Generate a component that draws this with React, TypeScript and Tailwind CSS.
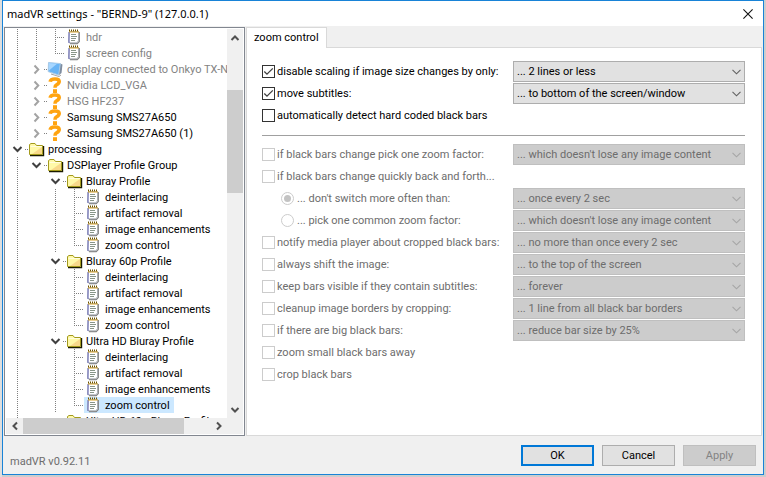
import { useState } from 'react';
import clsx from 'clsx';

type IconName = 'page' | 'folder' | 'screen' | 'unknown';

type TreeRow = {
  // one character per indent column: | line, T branch, L last branch, v open, > closed
  guides: string;
  icon: IconName;
  label: string;
  muted?: boolean;
  selected?: boolean;
};

const profileRows = (name: string, selected = false): TreeRow[] => [
  { guides: '| v', icon: 'folder', label: name },
  { guides: '| |T', icon: 'page', label: 'deinterlacing' },
  { guides: '| |T', icon: 'page', label: 'artifact removal' },
  { guides: '| |T', icon: 'page', label: 'image enhancements' },
  { guides: '| |L', icon: 'page', label: 'zoom control', selected },
];

const treeRows: TreeRow[] = [
  { guides: '||T', icon: 'page', label: 'hdr', muted: true },
  { guides: '||L', icon: 'page', label: 'screen config', muted: true },
  { guides: '|>', icon: 'screen', label: 'display connected to Onkyo TX-N', muted: true },
  { guides: '|>', icon: 'unknown', label: 'Nvidia LCD_VGA', muted: true },
  { guides: '|>', icon: 'unknown', label: 'HSG HF237', muted: true },
  { guides: '|>', icon: 'unknown', label: 'Samsung SMS27A650' },
  { guides: '|>', icon: 'unknown', label: 'Samsung SMS27A650 (1)' },
  { guides: 'v', icon: 'folder', label: 'processing' },
  { guides: '|v', icon: 'folder', label: 'DSPlayer Profile Group' },
  ...profileRows('Bluray Profile'),
  ...profileRows('Bluray 60p Profile'),
  ...profileRows('Ultra HD Bluray Profile', true),
  { guides: '| v', icon: 'folder', label: 'Ultra HD 60p Bluray Profile' },
];

type Option = {
  id: string;
  label: string;
  value?: string;
  kind?: 'checkbox' | 'radio';
  checked?: boolean;
  disabled?: boolean;
};

const activeOptions: Option[] = [
  { id: 'disable-scaling', label: 'disable scaling if image size changes by only:', value: '... 2 lines or less', checked: true },
  { id: 'move-subs', label: 'move subtitles:', value: '... to bottom of the screen/window', checked: true },
  { id: 'detect-bars', label: 'automatically detect hard coded black bars' },
];

const barOptions: Option[] = [
  { id: 'bars-change', label: 'if black bars change pick one zoom factor:', value: "... which doesn't lose any image content" },
  { id: 'bars-quick', label: 'if black bars change quickly back and forth...' },
  { id: 'switch-often', label: "... don't switch more often than:", value: '... once every 2 sec', kind: 'radio', checked: true },
  { id: 'common-zoom', label: '... pick one common zoom factor:', value: "... which doesn't lose any image content", kind: 'radio' },
  { id: 'notify', label: 'notify media player about cropped black bars:', value: '... no more than once every 2 sec' },
  { id: 'shift', label: 'always shift the image:', value: '... to the top of the screen' },
  { id: 'keep-bars', label: 'keep bars visible if they contain subtitles:', value: '... forever' },
  { id: 'cleanup', label: 'cleanup image borders by cropping:', value: '... 1 line from all black bar borders' },
  { id: 'big-bars', label: 'if there are big black bars:', value: '... reduce bar size by 25%' },
  { id: 'zoom-away', label: 'zoom small black bars away' },
  { id: 'crop', label: 'crop black bars' },
];

function Guide({ type }: { type: string }) {
  const dots = { stroke: '#808080', strokeDasharray: '1 1', shapeRendering: 'crispEdges' as const };
  return (
    <svg width="19" height="16" viewBox="0 0 19 16" fill="none" className="shrink-0">
      {(type === '|' || type === 'T') && <path d="M9.5 0V16" {...dots} />}
      {type === 'L' && <path d="M9.5 0V9" {...dots} />}
      {(type === 'T' || type === 'L') && <path d="M11 8.5H19" {...dots} />}
      {(type === 'v' || type === '>') && <path d="M17 8.5H18" {...dots} />}
      {type === 'v' && <path d="M5.5 6L9.5 10L13.5 6" stroke="#404040" strokeWidth="2" />}
      {type === '>' && <path d="M7.5 4.5L11.3 8.5L7.5 12.5" stroke="#a3a3a3" strokeWidth="2" />}
    </svg>
  );
}

function TreeIcon({ name }: { name: IconName }) {
  return (
    <svg width="19" height="16" viewBox="0 0 19 16" fill="none" className="shrink-0">
      {name !== 'page' && <rect y="8" width="1" height="1" fill="#808080" />}
      {name === 'folder' && (
        <>
          <path d="M3 14.5H16.5V5" stroke="#1a1a00" strokeWidth="1.4" />
          <path d="M2.5 13.5V3.5L4 2.5H8L9.5 4.5H15.5V13.5Z" fill="#fff9a8" stroke="#a39a1c" />
          <path d="M15 6V13H5Z" fill="#f8d98a" />
          <path d="M3.5 5.5H15" stroke="#fffde0" />
        </>
      )}
      {name === 'page' && (
        <>
          <path d="M5 14.7H12.2L14.3 12.5V3" stroke="#808080" strokeWidth="1.2" />
          <path d="M4.5 2.5H13.5V11.8L11.8 13.8H4L3.6 12Z" fill="#fff" stroke="#a8adb2" />
          <path d="M4 3V14" stroke="#7476bd" strokeWidth="1.2" />
          <path d="M4 1.5H14" stroke="#6b5200" strokeWidth="2" strokeDasharray="1 1" />
          <path d="M4 3H14" stroke="#d9a62c" />
          <path d="M6 5.5H11M6 7.5H12M6 9.5H11M6 11.5H10" stroke="#6b7b6b" strokeWidth="0.8" />
        </>
      )}
      {name === 'screen' && (
        <>
          <path d="M14 2.5L16.5 3.5L15.5 12L12.5 14.5Z" fill="#7f8da0" />
          <path d="M2.5 1.5L14.3 2.6L12.7 14L2.2 10.6Z" fill="#68b4f5" stroke="#a9cbe8" />
          <path d="M3 2L11 2.8L3 9.5Z" fill="#a6d6ff" />
          <path d="M5 13L13 15.5L15 14" stroke="#a4a4a4" />
        </>
      )}
      {name === 'unknown' && (
        <>
          <path
            d="M4.1 4.8C4.5 2.6 6.3 2 9 2C11.7 2 13.2 2.9 13.2 4.6C13.2 6.4 12 7 10.6 7.8C9.5 8.4 9 9 9 10.8"
            stroke="#ffa411"
            strokeWidth="3.6"
          />
          <rect x="7" y="12.2" width="4" height="3.8" fill="#ffa411" />
        </>
      )}
    </svg>
  );
}

function Arrow({ dir }: { dir: 'up' | 'down' | 'left' | 'right' }) {
  const paths = { up: 'M1.5 7L5 3.5L8.5 7', down: 'M1.5 3L5 6.5L8.5 3', left: 'M7 1.5L3.5 5L7 8.5', right: 'M3 1.5L6.5 5L3 8.5' };
  return (
    <svg width="10" height="10" viewBox="0 0 10 10" fill="none">
      <path d={paths[dir]} stroke="#505050" strokeWidth="2" />
    </svg>
  );
}

function Tree() {
  return (
    <div className="w-[241px] shrink-0 border border-[#828790] bg-white p-px flex flex-col min-h-0">
      <div className="flex flex-1 min-h-0">
        <ul className="flex-1 min-w-0 overflow-hidden pl-0.5" aria-label="Settings tree">
          {treeRows.map((row, i) => (
            <li key={i} className="flex h-4 leading-[17px] whitespace-nowrap">
              {row.guides.split('').map((g, j) => (
                <Guide key={j} type={g} />
              ))}
              <span className={clsx('flex pr-1', row.selected && 'bg-[#cce8ff]', row.muted && 'text-[#838383]')}>
                <TreeIcon name={row.icon} />
                <span className="pl-0.5">{row.label}</span>
              </span>
            </li>
          ))}
        </ul>
        <div className="w-4 shrink-0 bg-[#f0f0f0] flex flex-col">
          <button aria-label="Scroll up" className="h-[17px] flex items-center justify-center">
            <Arrow dir="up" />
          </button>
          <div className="mt-11 h-[103px] bg-[#cdcdcd]" />
          <button aria-label="Scroll down" className="mt-auto h-[17px] flex items-center justify-center">
            <Arrow dir="down" />
          </button>
        </div>
      </div>
      <div className="h-4 shrink-0 bg-[#f0f0f0] flex pr-4">
        <button aria-label="Scroll left" className="w-[17px] flex items-center justify-center">
          <Arrow dir="left" />
        </button>
        <div className="w-[161px] bg-[#cdcdcd]" />
        <button aria-label="Scroll right" className="ml-auto w-[17px] flex items-center justify-center">
          <Arrow dir="right" />
        </button>
      </div>
    </div>
  );
}

function OptionRow({ option }: { option: Option }) {
  const { id, label, value, kind = 'checkbox', disabled } = option;
  const [checked, setChecked] = useState(!!option.checked);
  return (
    <div className={clsx('grid grid-cols-[251px_1fr] items-center h-[22px] pb-px', disabled && 'text-[#6d6d6d]')}>
      <div className={clsx('flex items-center', kind === 'radio' ? 'pl-[19px] gap-[3px]' : 'gap-0.5')}>
        <span className="relative flex">
          <input
            id={id}
            type={kind}
            checked={checked}
            disabled={disabled}
            onChange={(e) => setChecked(e.target.checked)}
            className={clsx(
              'appearance-none w-[13px] h-[13px] border bg-white',
              kind === 'radio' && 'rounded-full',
              disabled ? 'border-[#cccccc]' : 'border-[#333333]'
            )}
          />
          {checked && (
            <svg width="13" height="13" viewBox="0 0 13 13" fill="none" className="absolute inset-0 pointer-events-none">
              {kind === 'radio' ? (
                <circle cx="6.5" cy="6.5" r="3.5" fill="#c3c3c3" />
              ) : (
                <path d="M2.3 6.5L5 9.2L10.8 3.4" stroke="#404040" strokeWidth="1.3" />
              )}
            </svg>
          )}
        </span>
        <label htmlFor={id} className="whitespace-nowrap">
          {label}
        </label>
      </div>
      {value && (
        <div className="relative flex">
          <select
            aria-label={label}
            disabled={disabled}
            className={clsx(
              'appearance-none w-full h-[21px] border pl-[3px] pr-5 opacity-100',
              disabled ? 'bg-[#cccccc] border-[#bfbfbf]' : 'bg-[#e1e1e1] border-[#adadad]'
            )}
          >
            <option>{value}</option>
          </select>
          <svg width="9" height="6" viewBox="0 0 9 6" fill="none" className="absolute right-1 top-2 pointer-events-none">
            <path d="M0.5 0.8L4.5 4.8L8.5 0.8" stroke={disabled ? '#a6a6a6' : '#606060'} strokeWidth="1.1" />
          </svg>
        </div>
      )}
    </div>
  );
}

export default function App() {
  return (
    <div className="h-screen bg-[#cdcdcd] border-l-2 border-[#dedede] pr-0.5 pb-0.5 flex font-['Roboto',sans-serif] text-[11px] leading-4 text-black">
      <div className="flex-1 min-w-0 border border-[#1883d7] bg-[#f0f0f0] flex flex-col">
        <header className="h-[25px] shrink-0 bg-white flex items-center justify-between pl-1 pr-2.5">
          <h1 className="font-['Noto_Sans',sans-serif]">madVR settings - "BERND-9" (127.0.0.1)</h1>
          <button aria-label="Close">
            <svg width="10" height="10" viewBox="0 0 10 10" fill="none">
              <path d="M0.4 0.4L9.6 9.6M9.6 0.4L0.4 9.6" stroke="#111" strokeWidth="1.1" />
            </svg>
          </button>
        </header>

        <main className="flex-1 min-h-0 flex pt-px pl-px pr-px gap-px">
          <Tree />
          <div className="flex-1 min-w-0 flex flex-col">
            <div role="tablist" className="flex">
              <button
                role="tab"
                aria-selected="true"
                className="relative z-10 h-[21px] -mb-px px-[7px] bg-white border border-b-0 border-[#d9d9d9]"
              >
                zoom control
              </button>
            </div>
            <section className="flex-1 bg-white border border-[#d9d9d9] pl-[15px] pr-4 pt-[13px]">
              {activeOptions.map((option) => (
                <OptionRow key={option.id} option={option} />
              ))}
              <hr className="mt-2 mb-2 border-[#a0a0a0]" />
              {barOptions.map((option) => (
                <OptionRow key={option.id} option={{ ...option, disabled: true }} />
              ))}
            </section>
          </div>
        </main>

        <footer className="shrink-0 h-[38px] flex items-start justify-between px-[7px] pt-[9px]">
          <span className="pt-[9px] text-[#6d6d6d]">madVR v0.92.11</span>
          <div className="flex gap-2">
            <button className="w-[73px] h-[21px] bg-[#e1e1e1] border-2 border-[#0078d7] leading-none">OK</button>
            <button className="w-[73px] h-[21px] bg-[#e1e1e1] border border-[#adadad] leading-none">Cancel</button>
            <button disabled className="w-[73px] h-[21px] bg-[#cccccc] border border-[#bfbfbf] text-[#838383] leading-none">
              Apply
            </button>
          </div>
        </footer>
      </div>
    </div>
  );
}
